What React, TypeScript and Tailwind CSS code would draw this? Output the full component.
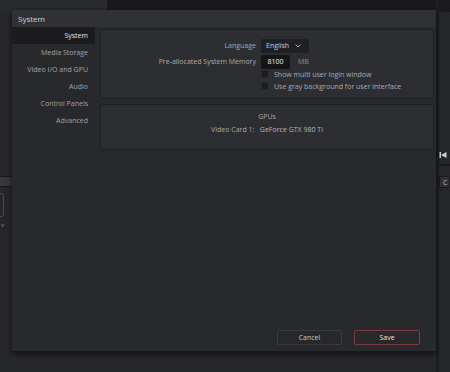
import React from 'react';

const sections = ['System', 'Media Storage', 'Video I/O and GPU', 'Audio', 'Control Panels', 'Advanced'];

function Checkbox({ label }: { label: string }) {
  return (
    <div className="flex items-center gap-[5px] h-[12px]">
      <div className="w-[8px] h-[8px] rounded-[1px] bg-[#1b1c1f] border border-[#2a2b2f]" />
      <span className="text-[#a9aaae]">{label}</span>
    </div>
  );
}

export default function App() {
  return (
    <div
      className="relative w-[450px] h-[372px] overflow-hidden bg-[#26272b] text-[7px] leading-none"
      style={{ fontFamily: '"Open Sans", "Noto Sans", sans-serif' }}
    >
      {/* windows behind the dialog */}
      <div className="absolute left-0 top-0 w-[107px] h-[12px] bg-[#2a2b2f]" />
      <div className="absolute left-[107px] top-0 right-0 h-[12px] bg-[#1a1a1c]" />
      <div className="absolute left-0 top-[176px] w-[12px] h-[11px] bg-[#37383c] border-y border-[#1a1a1c]" />
      <div className="absolute left-[-4px] top-[193px] w-[8px] h-[24px] rounded-[3px] border border-[#4a4b50]" />
      <div className="absolute left-[1px] top-[222px] text-[6px] text-[#8a8b90]">v</div>
      <div className="absolute left-[436px] top-0 w-[3px] bottom-0 bg-[#1d1e21]" />
      <svg className="absolute left-[439px] top-[151px]" width="8" height="8" viewBox="0 0 8 8">
        <rect x="0.5" y="1" width="1.5" height="6" fill="#d0d1d4" />
        <path d="M2 4 L7.5 1 L7.5 7 Z" fill="#d0d1d4" />
      </svg>
      <div className="absolute left-[439px] top-[164px] right-0 h-[2px] bg-[#1a1a1c]" />
      <div className="absolute left-[439px] top-[176px] right-0 h-[12px] bg-[#303135] border border-[#1a1a1c] text-[#b8b9bc] pl-[3px] flex items-center">C</div>

      {/* dialog */}
      <div className="absolute left-[12px] top-[10px] w-[424px] h-[342px] flex flex-col bg-[#28292d] shadow-[0_2px_6px_rgba(0,0,0,0.6)] border-b border-[#18181a]">
        <div className="h-[17px] shrink-0 flex items-center px-[6px] bg-[#303135] text-[8px] text-[#d4d5d8]">System</div>
        <div className="flex-1 flex">
          <div className="w-[83px] flex flex-col">
            {sections.map((s, i) => (
              <div
                key={s}
                className={`h-[17px] flex items-center justify-end pr-[7px] ${
                  i === 0 ? 'bg-[#1b1b1e] text-[#e2e3e6]' : 'text-[#a2a3a7]'
                }`}
              >
                {s}
              </div>
            ))}
          </div>
          <div className="flex-1 flex flex-col pl-[5px] pr-[2px] pt-[2px] gap-[5px]">
            <div className="h-[70px] bg-[#2d2e32] border border-[#1e1f22] rounded-[2px] flex flex-col pt-[8px]">
              <div className="flex items-center h-[15px]">
                <span className="w-[155px] text-right text-[#a9aaae]">Language</span>
                <div className="ml-[5px] w-[48px] h-[14px] bg-[#1f2023] rounded-[2px] flex items-center px-[5px] gap-[6px] text-[#c9cacd]">
                  English
                  <svg width="6" height="4" viewBox="0 0 6 4" fill="none">
                    <path d="M0.5 0.5 L3 3 L5.5 0.5" stroke="#a9aaae" strokeWidth="1" />
                  </svg>
                </div>
              </div>
              <div className="flex items-center h-[15px] mt-[1px]">
                <span className="w-[155px] text-right text-[#a9aaae]">Pre-allocated System Memory</span>
                <div className="ml-[5px] w-[29px] h-[14px] bg-[#151517] rounded-[2px] flex items-center justify-center text-[#f2f2f4]">8100</div>
                <span className="ml-[8px] text-[#8e8f93]">MB</span>
              </div>
              <div className="pl-[160px] flex flex-col -mt-[1px]">
                <Checkbox label="Show multi user login window" />
                <Checkbox label="Use gray background for user interface" />
              </div>
            </div>
            <div className="h-[46px] bg-[#2d2e32] border border-[#1e1f22] rounded-[2px] flex flex-col items-center pt-[8px] gap-[6px] text-[#a9aaae]">
              <span>GPUs</span>
              <span>
                Video Card 1:&nbsp;&nbsp; <span className="text-[#b8b9bd]">GeForce GTX 980 Ti</span>
              </span>
            </div>
            <div className="flex-1" />
            <div className="flex justify-end gap-[12px] pr-[14px] pb-[6px]">
              <button className="w-[65px] h-[15px] rounded-[2px] bg-[#27282c] border border-[#3a3b3f] text-[#c6c7ca] text-[7px]">Cancel</button>
              <button className="w-[66px] h-[15px] rounded-[2px] bg-[#27282c] border border-[#7d3b42] text-[#e4e5e8] text-[7px]">Save</button>
            </div>
          </div>
        </div>
      </div>
    </div>
  );
}
